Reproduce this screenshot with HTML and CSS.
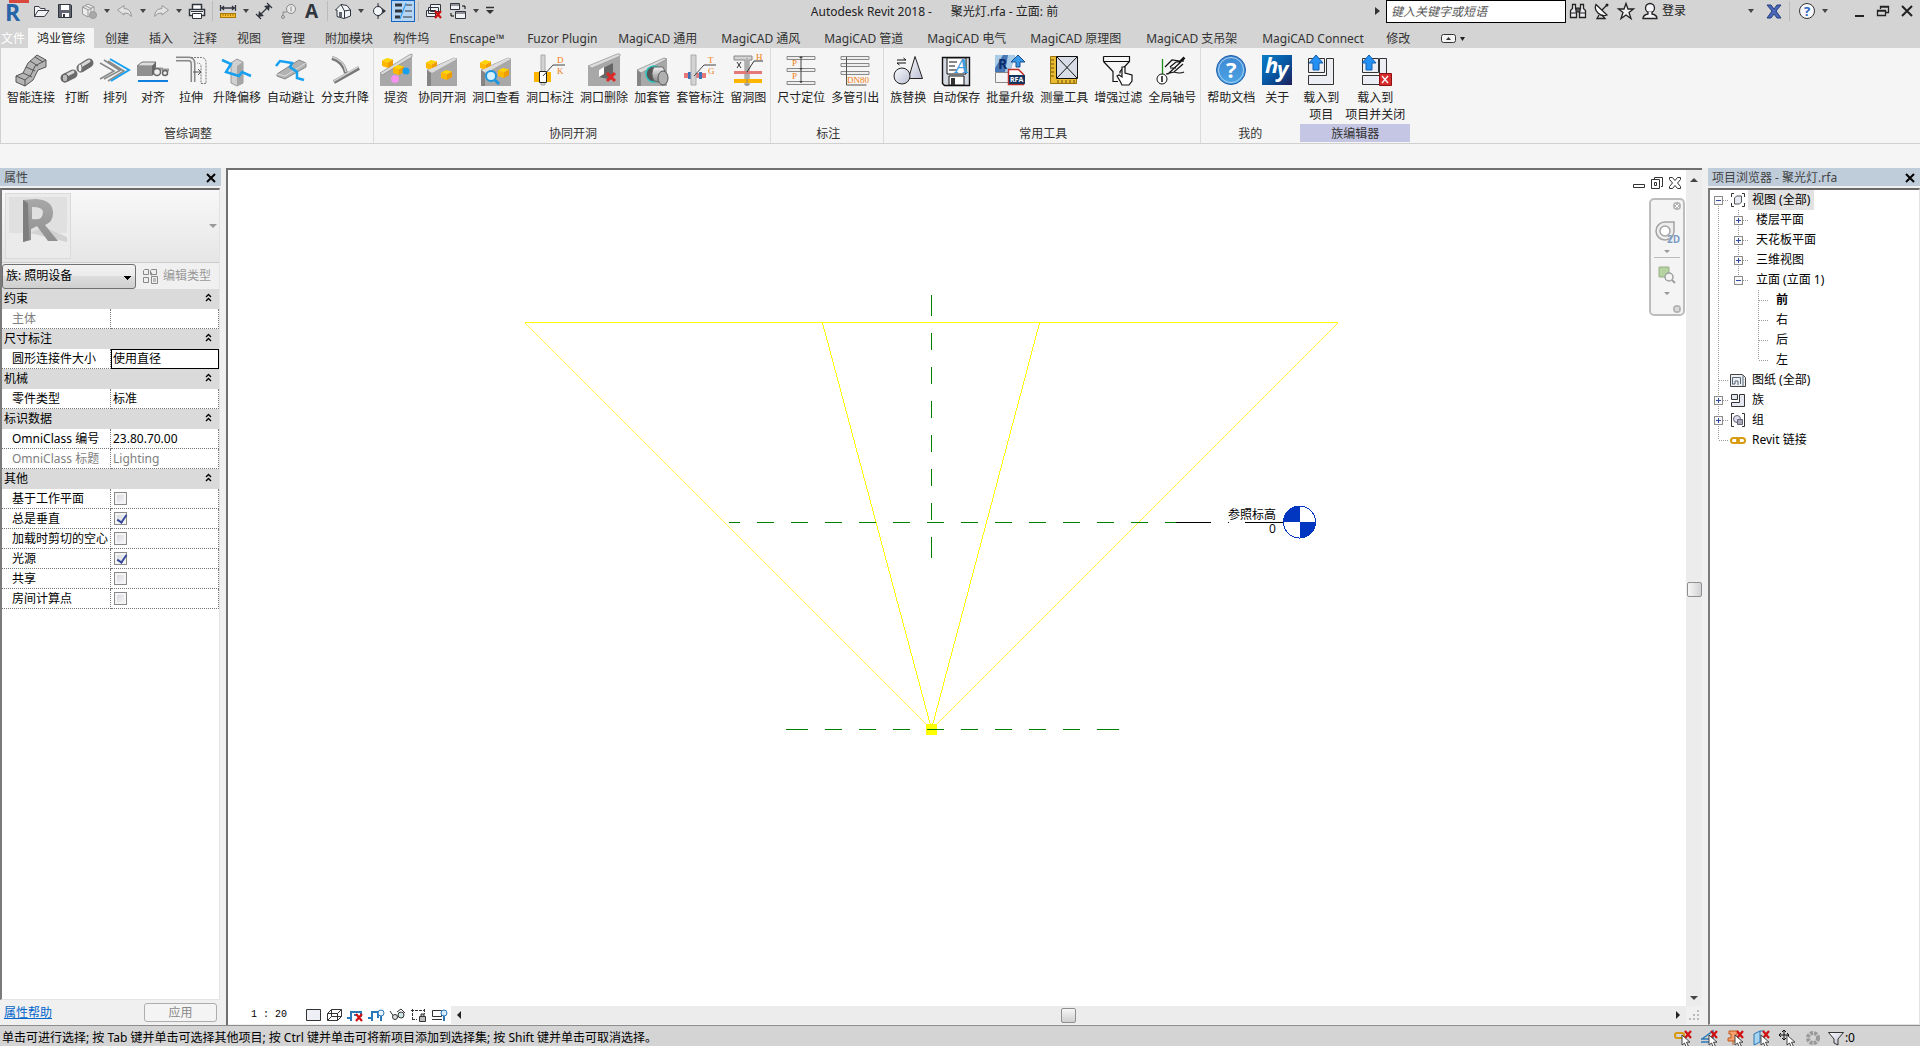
FILE: index.html
```html
<!DOCTYPE html>
<html lang="zh-CN">
<head>
<meta charset="utf-8">
<title>Autodesk Revit 2018 - 聚光灯.rfa - 立面: 前</title>
<link rel="stylesheet" href="styles.css">
</head>
<body>
<svg class="defs" width="0" height="0" aria-hidden="true">
  <defs>
    <linearGradient id="gSteel" x1="0" y1="0" x2="0" y2="1"><stop offset="0" stop-color="#f2f2f2"/><stop offset="1" stop-color="#7c7c7c"/></linearGradient>
    <linearGradient id="gLav" x1="0" y1="0" x2="1" y2="1"><stop offset="0" stop-color="#fbfbff"/><stop offset="1" stop-color="#b9bdd0"/></linearGradient>
    <linearGradient id="gHelp" x1="0" y1="0" x2="0" y2="1"><stop offset="0" stop-color="#3f87d2"/><stop offset="1" stop-color="#4aa4e4"/></linearGradient>
    <linearGradient id="gHy" x1="0" y1="0" x2="1" y2="1"><stop offset="0" stop-color="#0a7fc8"/><stop offset=".5" stop-color="#0858a4"/><stop offset="1" stop-color="#1c1f5a"/></linearGradient>
    <g id="cube"><path d="M0 2.500 5 0 11 1.500 6 4.500z" fill="#ffd400"/><path d="M0 2.500 6 4.500V10L0 8z" fill="#ffb800"/><path d="M6 4.500 11 1.500V7L6 10z" fill="#ef9c00"/></g>
    <g id="wall"><path d="M1 14 28 2l3 1v27H5l-4-1z" fill="#a8a8a8"/><path d="M1 14 28 2l3 1L5 17z" fill="#dcdcdc" stroke="#8c8c8c" stroke-width=".7"/><path d="M1 14l4 3v13H1z" fill="#858585"/></g>
    <g id="redx"><path d="M0 0 6 7M6 0 0 7" stroke="#d01010" stroke-width="2.200"/></g>
    <g id="ptr"><path d="M0 0v10l2.500-2 1.800 4 2-1-1.800-3.800H8z" fill="#fff" stroke="#333" stroke-width=".9"/></g>
    <g id="tv"><path d="M8.500 0V20" stroke="#999" stroke-dasharray="1 1"/></g>
    <g id="tt"><path d="M8.500 0V20M9 10.500H18" stroke="#999" stroke-dasharray="1 1"/></g>
    <g id="tl"><path d="M8.500 0V10M9 10.500H18" stroke="#999" stroke-dasharray="1 1"/></g>
    <g id="minus"><rect x="4.500" y="6.500" width="8" height="8" fill="#f8f8f8" stroke="#8c8c8c"/><path d="M6 10.500H11" stroke="#3149a0"/></g>
    <g id="plus"><rect x="4.500" y="6.500" width="8" height="8" fill="#f8f8f8" stroke="#8c8c8c"/><path d="M6 10.500H11M8.500 8V13" stroke="#3149a0"/></g>
    <g id="chev"><path d="M1 4 3.500 1.500 6 4M1 8 3.500 5.500 6 8" fill="none" stroke="#000" stroke-width="1.400"/></g>
  </defs>
</svg>

<header class="titlebar">
  <div class="qat">
    <button class="q q-logo" aria-label="Revit"><svg width="29" height="24"><rect x="9" y="0" width="20" height="3" fill="#d9483b"/><text x="5" y="21" class="t-logo">R</text></svg></button>
    <button class="q" aria-label="打开"><svg width="18" height="18"><path d="M2.500 14.500V4.500H7l1.500 2H13v2M2.500 14.500 6 8.500h11l-4.500 6z" fill="#f2f3f6" stroke="#3a3d46"/></svg></button>
    <button class="q" aria-label="保存"><svg width="18" height="18"><path d="M2.500 2.500h12l1 1v12h-13z" fill="#60656f" stroke="#30343d"/><path d="M5 3h8v5H5zM6 11h7v4H6z" fill="#fff"/><path d="M7 12h2v3H7z" fill="#30343d"/></svg></button>
    <button class="q" aria-label="同步"><svg width="18" height="18" fill="#ececec" stroke="#999"><path d="M2.500 5 8 2l6 3v6l-6 4-5.500-3zM2.500 5 8 8l6-3M8 8v7M5 3.500l6 3v6"/><circle cx="13" cy="13" r="3.500" fill="#aaa"/></svg></button>
    <i class="caret"></i>
    <button class="q" aria-label="放弃"><svg width="18" height="18"><path d="M1.500 8 8 3.500V6.500q7 0 7.500 8-3-4-7.500-3.500V13z" fill="#e3e3e3" stroke="#999"/></svg></button>
    <i class="caret"></i>
    <button class="q" aria-label="重做"><svg width="18" height="18"><path d="M16.500 8 10 3.500V6.500q-7 0-7.500 8 3-4 7.500-3.500V13z" fill="#e3e3e3" stroke="#999"/></svg></button>
    <i class="caret"></i>
    <button class="q" aria-label="打印"><svg width="18" height="18"><path d="M4.500 7V2.500h9V7M1.500 7.500h15v6h-15z" fill="#fff" stroke="#30343d" stroke-width="1.500"/><path d="M4.500 11.500h9v5h-9z" fill="#fff" stroke="#30343d"/><path d="M3 9.500h12" stroke="#30343d"/></svg></button>
    <i class="sep"></i>
    <button class="q" aria-label="测量"><svg width="18" height="18"><path d="M1.500 3V9M16.500 3V9M2 6H16M5 4 3 6l2 2M13 4l2 2-2 2" fill="none" stroke="#30343d" stroke-width="1.300"/><rect x="1.500" y="11.500" width="15" height="4" fill="#f6bd2a" stroke="#a97809"/><path d="M4 12v2M6.500 12v2M9 12v2M11.500 12v2M14 12v2" stroke="#a97809"/></svg></button>
    <i class="caret"></i>
    <button class="q" aria-label="对齐标注"><svg width="18" height="18"><path d="M1 12l5 5M12 1l5 5M4 14 14 4" stroke="#30343d" stroke-width="1.200"/><path d="M3 15l1-6 5 5zM15 3l-1 6-5-5z" fill="#30343d"/></svg></button>
    <button class="q" aria-label="按类别标记"><svg width="18" height="18"><circle cx="12" cy="7" r="4.500" fill="#e8e8e8" stroke="#888"/><path d="M8 10H4v4" stroke="#888" fill="none"/><circle cx="4" cy="15" r="1.500" fill="none" stroke="#888"/><path d="M12 4.500v5" stroke="#888"/></svg></button>
    <button class="q" aria-label="文字"><svg width="18" height="20"><text x="2" y="17" class="t-a">A</text></svg></button>
    <i class="sep"></i>
    <button class="q" aria-label="默认三维视图"><svg width="18" height="18"><path d="M1.500 8 7 2.500l6 1L16.500 8v6L10 16.500 3 14.500V8z" fill="#f2f3f6" stroke="#30343d"/><path d="M7 2.500 10.500 9M10.500 9V16M10.500 9l6-1" stroke="#30343d" fill="none"/><path d="M5 10h3v5H5z" fill="#60656f"/></svg></button>
    <i class="caret"></i>
    <button class="q" aria-label="剖面"><svg width="18" height="18"><path d="M8 1v16" stroke="#30343d"/><path d="M8 3l8 6-8 6z" fill="#30343d"/><circle cx="8" cy="9" r="4.500" fill="#f5f6fa" stroke="#30343d"/></svg></button>
    <button class="q-on" aria-label="细线" aria-pressed="true"><svg width="20" height="18"><path d="M2 3h7M2 9h7M2 15h5" stroke="#30343d" stroke-width="3"/><path d="M13 3h6M12 9h7M10 15h9" stroke="#30343d"/><path d="M13 1 7 17" stroke="#2f9bea" stroke-width="1.200"/></svg></button>
    <i class="sep"></i>
    <button class="q" aria-label="关闭隐藏窗口"><svg width="18" height="18"><path d="M5.500 2.500h10v7h-10zM3.500 5.500h10v6h-10zM1.500 8.500h9v6h-9z" fill="#f2f3f6" stroke="#30343d"/><use href="#redx" x="10" y="9"/></svg></button>
    <button class="q" aria-label="切换窗口"><svg width="18" height="18"><path d="M1.500 1.500h9v6h-9zM6.500 9.500h10v7h-10z" fill="#f2f3f6" stroke="#30343d"/><path d="M7 11h9M2 3h8" stroke="#30343d"/><path d="M13 4h3v3M2 11v3h3" fill="none" stroke="#000"/></svg></button>
    <i class="caret"></i>
    <button class="q-more" aria-label="自定义快速访问工具栏"><svg width="10" height="10"><path d="M1 1.500h8" stroke="#333" stroke-width="1.500"/><path d="M1 4h8L5 8z" fill="#333"/></svg></button>
  </div>
  <h1 class="title">Autodesk Revit 2018 -      聚光灯.rfa - 立面: 前</h1>
  <div class="info">
    <i class="tri-right"></i>
    <input class="search" type="text" placeholder="键入关键字或短语" aria-label="键入关键字或短语">
    <button class="q" aria-label="搜索"><svg width="18" height="18"><path d="M3.500 2.500h3v4l1 2v7h-6v-7l2-2zM11.500 2.500h3v4l2 2v7h-6v-7l1-2z" fill="#ebebf2" stroke="#222" stroke-width="1.300"/><path d="M7 6h4v4H7zM2 11h5M11 11h5" fill="#555" stroke="#222"/></svg></button>
    <button class="q" aria-label="通讯中心"><svg width="18" height="18"><path d="M3 2.500 14 13q-5 2-9-2T3 2.500z" fill="#fafafa" stroke="#222" stroke-width="1.300"/><path d="M9 8l5-5M6 13l-2 3.500h8L9 13" fill="none" stroke="#222" stroke-width="1.300"/><circle cx="14" cy="3" r="1.500" fill="#222"/></svg></button>
    <button class="q" aria-label="收藏夹"><svg width="18" height="18"><path d="M9 1.500l2 5.500h5.500l-4.500 3.500 2 6L9 13l-5 3.500 2-6L1.500 7H7z" fill="#eee" stroke="#222" stroke-width="1.300"/></svg></button>
    <button class="login"><svg width="18" height="18"><circle cx="9" cy="6" r="4.500" fill="#f4f4f8" stroke="#222" stroke-width="1.300"/><path d="M7 10v2q-5 1-5 4.500h14Q16 13 11 12v-2" fill="#f4f4f8" stroke="#222" stroke-width="1.300"/></svg>登录</button>
    <i class="caret caret-login"></i>
    <button class="q q-x" aria-label="Exchange"><svg width="18" height="18"><path d="M2 3h4l3 4 3-4h4l-5 6 5 7h-4l-3-4-3 4H2l5-7z" fill="#4a68b8" stroke="#243c80"/></svg></button>
    <i class="sep"></i>
    <button class="q q-help" aria-label="帮助"><svg width="18" height="18"><circle cx="9" cy="9" r="7.500" fill="#f6f8fc" stroke="#333"/><text x="6" y="14" class="t-q">?</text></svg></button>
    <i class="caret"></i>
    <button class="win win-min" aria-label="最小化"><svg width="16" height="16"><path d="M4 13h9" stroke="#222" stroke-width="2"/></svg></button>
    <button class="win" aria-label="还原"><svg width="16" height="16"><path d="M5.500 6V3.500h8v6H11M2.500 7.500h8v5h-8zM3 8h8M6 4h8" fill="none" stroke="#222" stroke-width="1.300"/></svg></button>
    <button class="win" aria-label="关闭"><svg width="16" height="16"><path d="M3 3 13 13M13 3 3 13" stroke="#222" stroke-width="2"/></svg></button>
  </div>
</header>

<nav class="tabs">
  <button class="tab tab-file">文件</button>
  <button class="tab tab-on">鸿业管综</button>
  <button class="tab">创建</button>
  <button class="tab">插入</button>
  <button class="tab">注释</button>
  <button class="tab">视图</button>
  <button class="tab">管理</button>
  <button class="tab">附加模块</button>
  <button class="tab">构件坞</button>
  <button class="tab tab-s">Enscape™</button>
  <button class="tab tab-m">Fuzor Plugin</button>
  <button class="tab tab-l">MagiCAD 通用</button>
  <button class="tab tab-l">MagiCAD 通风</button>
  <button class="tab tab-l">MagiCAD 管道</button>
  <button class="tab tab-l">MagiCAD 电气</button>
  <button class="tab tab-xl">MagiCAD 原理图</button>
  <button class="tab tab-xl">MagiCAD 支吊架</button>
  <button class="tab tab-xxl">MagiCAD Connect</button>
  <button class="tab">修改</button>
  <button class="tab tab-toggle" aria-label="最小化功能区"><svg width="28" height="12"><rect x="1.500" y="2.500" width="14" height="8" rx="2" fill="#f4f4f4" stroke="#333"/><path d="M6 8h5L8.500 5z" fill="#333"/><path d="M20 5h5l-2.500 4z" fill="#222"/></svg></button>
</nav>

<section class="ribbon">
  <div class="panel">
    <div class="tools">
      <button class="tool"><svg width="32" height="32"><path d="M1 22l7-3 5-10 9-8 9 5v7l-8 3-5 10-8 6-9-4z" fill="#b5b5b5" stroke="#555"/><path d="M1 22l9 4 6-5 4-9 11-6M8 19l9 4M11 13l9 4M15 7l8 5M20 3l8 5M10 26v6" fill="none" stroke="#555"/></svg>智能连接</button>
      <button class="tool"><svg width="32" height="32"><path d="M4 24 12 20M20 14 28 9" stroke="#6a6a6a" stroke-width="9" stroke-linecap="round"/><path d="M4 22 12 18M20 12 28 7" stroke="#d8d8d8" stroke-width="3" stroke-linecap="round"/><ellipse cx="4" cy="24" rx="3" ry="4" fill="#bbb" stroke="#555"/><ellipse cx="19" cy="14" rx="2" ry="4" fill="#eee" stroke="#777"/></svg>打断</button>
      <button class="tool"><svg width="32" height="32" fill="none"><path d="M1 9 15 17 1 25M5 6 21 16.500 5 25M9 7 25 17 9 27" stroke="#8a8a8a" stroke-width="1.600"/><path d="M11 5 30 16 12 27" stroke="#18a0f0" stroke-width="2"/></svg>排列</button>
      <button class="tool"><svg width="32" height="32"><path d="M0 12 5 8h14l-3 4z" fill="#ddd" stroke="#777"/><path d="M0 12h15v10H0z" fill="#8f8f8f"/><path d="M15 12l4-4v10l-4 4z" fill="#666"/><path d="M18 15h8M25 16h7" stroke="#999" stroke-width="3"/><circle cx="20" cy="18" r="3.500" fill="#eee" stroke="#666" stroke-width="1.500"/><circle cx="28" cy="19" r="2.500" fill="#eee" stroke="#666" stroke-width="1.500"/><path d="M1 27h30" stroke="#1080e0" stroke-width="2"/></svg>对齐</button>
      <button class="tool"><svg width="32" height="32" fill="none"><path d="M1 5h13q4 0 4 5v18" stroke="#888" stroke-width="5"/><path d="M1 5h13q4 0 4 5v18" stroke="#eee" stroke-width="2"/><path d="M16 3.500h10q5 0 5 5v21h-5V12q0-3-4-3" stroke="#777" stroke-dasharray="2 1"/><path d="M18 18h8M23 15l3 3-3 3" stroke="#555"/></svg>拉伸</button>
      <button class="tool"><svg width="32" height="32"><path d="M10 9l6-4 6 3v21l-6 3-6-3z" fill="#d0d0d0" stroke="#999"/><path d="M16 12l6-4v21l-6 3z" fill="#a5a5a5"/><path d="M1 6l9 4-5 8 13 4 3-4 9 4" fill="none" stroke="#18a0f0" stroke-width="2.500"/></svg>升降偏移</button>
      <button class="tool"><svg width="32" height="32"><path d="M2 20 24 6l7 3v4L10 25l-8-3z" fill="#b2b2b2" stroke="#888"/><path d="M2 20l8 2 21-13" fill="none" stroke="#ddd"/><path d="M1 12l4-5 12 2-2 4 7 5v6l7 2" fill="none" stroke="#18a0f0" stroke-width="2.500"/></svg>自动避让</button>
      <button class="tool"><svg width="32" height="32" fill="none"><path d="M3 4q11 3 14 15M5 28 30 14" stroke="#777" stroke-width="4"/><path d="M3 3q12 3 14 15M5 27 29 13" stroke="#d0d0d0" stroke-width="1.600"/></svg>分支升降</button>
    </div>
    <h2>管综调整</h2>
  </div>
  <div class="panel">
    <div class="tools">
      <button class="tool"><svg width="32" height="32"><path d="M0 19 32 0v32H0z" fill="#a8a8a8"/><path d="M0 19 29 1l3-1v3L2 21z" fill="#dcdcdc" stroke="#8c8c8c" stroke-width=".7"/><use href="#cube" x="2" y="4"/><use href="#cube" x="13" y="11"/><circle cx="26" cy="17" r="3.500" fill="#18a0f0"/><circle cx="15" cy="25" r="4" fill="#f492f0"/></svg>提资</button>
      <button class="tool"><svg width="32" height="32"><use href="#wall" y="2"/><use href="#cube" x="0" y="6"/><path d="M2 16 28 4l3 1L6 19z" fill="#dcdcdc"/><use href="#cube" x="15" y="16"/></svg>协同开洞</button>
      <button class="tool"><svg width="32" height="32"><use href="#wall" y="2"/><use href="#cube" x="0" y="6"/><path d="M2 16 28 4l3 1L6 19z" fill="#dcdcdc"/><use href="#cube" x="18" y="14"/><circle cx="11" cy="22" r="5" fill="#d6f0ff" stroke="#1996e0" stroke-width="2"/><path d="M15 26l4 4" stroke="#1996e0" stroke-width="3"/></svg>洞口查看</button>
      <button class="tool"><svg width="32" height="32"><path d="M0 18h17v10H0z" fill="#ffb400"/><path d="M7 1h4v30H7z" fill="#d3d3d3" stroke="#aaa"/><path d="M5.500 17.500h7v11h-7z" fill="#fff" stroke="#222"/><path d="M9 22 19 11h12" fill="none" stroke="#444"/><text x="23" y="9" class="t-o">D</text><text x="23" y="20" class="t-o">K</text></svg>洞口标注</button>
      <button class="tool"><svg width="32" height="32"><path d="M0 12 29 0h3v32H0z" fill="#a8a8a8"/><path d="M0 12 29 0h3v2L4 14z" fill="#dcdcdc" stroke="#999" stroke-width=".7"/><path d="M11 16 25 9v17l-14-3z" fill="#666"/><path d="M11 16l5-3v7l-5 3z" fill="#fff"/><path d="M19 19l8 8M27 19l-8 8" stroke="#e02828" stroke-width="3"/></svg>洞口删除</button>
      <button class="tool"><svg width="32" height="32"><use href="#wall" y="2"/><circle cx="18" cy="20" r="8" fill="#555" stroke="#28c4c0" stroke-width="1.500"/><path d="M18 13h9l4 9-4 7-9-2q-4-8 0-14z" fill="url(#gSteel)" stroke="#666"/><ellipse cx="27" cy="24" rx="5" ry="7" fill="#b0b0b0" stroke="#555"/></svg>加套管</button>
      <button class="tool"><svg width="32" height="32"><path d="M0 19h22v5H0z" fill="#e67878"/><path d="M4 18h3v7H4zM15 18h3v7h-3z" fill="#3c72b8"/><path d="M7 1h5v30H7z" fill="#d3d3d3" stroke="#aaa"/><path d="M10 22 20 11h12" fill="none" stroke="#444"/><text x="24" y="9" class="t-o">T</text><text x="24" y="20" class="t-o">G</text></svg>套管标注</button>
      <button class="tool"><svg width="32" height="32"><path d="M2 2h18v4h-3v25h-4V6H2z" fill="#d3d3d3" stroke="#888"/><path d="M2 17h28v3H2z" fill="#e67878"/><path d="M2 25h28v4H2z" fill="#ffb400"/><path d="M15 4v28" stroke="#888"/><path d="M5 8l4 6M9 8l-4 6M15 18 22 7h9" fill="none" stroke="#333"/><text x="24" y="6" class="t-o">H</text></svg>留洞图</button>
    </div>
    <h2>协同开洞</h2>
  </div>
  <div class="panel">
    <div class="tools">
      <button class="tool"><svg width="32" height="32"><path d="M2 2.500h28v3H2zM2 14.500h28v3H2zM2 27.500h28v3H2z" fill="#eee" stroke="#888"/><path d="M16 3v26" stroke="#444"/><path d="M14 4l2-2 2 2zM14 14l2 2 2-2zM14 27l2 2 2-2z" fill="#444"/><text x="7" y="12" class="t-o">P</text><text x="7" y="25" class="t-o">P</text></svg>尺寸定位</button>
      <button class="tool"><svg width="32" height="32"><path d="M2 2.500h28v3H2zM2 9.500h28v3H2zM2 17.500h28v3H2z" fill="#eee" stroke="#888"/><path d="M7.500 3v28h20" fill="none" stroke="#555"/><text x="8" y="29" class="t-dn">DN80</text></svg>多管引出</button>
    </div>
    <h2>标注</h2>
  </div>
  <div class="panel">
    <div class="tools">
      <button class="tool"><svg width="32" height="32"><path d="M16.500 24.500 23 2.500l7.500 22z" fill="url(#gLav)" stroke="#222"/><circle cx="10" cy="22" r="8" fill="url(#gLav)" stroke="#222"/><path d="M5 6h9l-2.500-2M14 9H5l2.500 2" fill="none" stroke="#111"/></svg>族替换</button>
      <button class="tool"><svg width="32" height="32"><path d="M2.500 3.500h27v28h-25l-2-2z" fill="#d5d9e2" stroke="#111" stroke-width="1.400"/><path d="M7 4h19v16H7zM9 22h15v9H9z" fill="#fff" stroke="#111"/><path d="M11 24h4v7h-4z" fill="#333"/><path d="M9 8h8M9 12h6M9 16h8" stroke="#111"/><text x="15" y="19" class="t-save">A</text></svg>自动保存</button>
      <button class="tool"><svg width="32" height="32"><path d="M1.500 18.500h16v10h-16z" fill="#f4f4f4" stroke="#888"/><path d="M1 1h20l-5 17H1z" fill="#4877b5"/><path d="M1 1h8L1 14zM14 1h7l-5 17h-5z" fill="#a8cbe8"/><text x="4" y="15" class="t-r">R</text><path d="M22 13V8h-5l7-7 7 7h-5v5z" fill="#399ae8" stroke="#1b4e8c"/><path d="M14.500 15.500h10l5 5v10h-15z" fill="#fff" stroke="#c03028" stroke-width="1.500"/><path d="M15 21h16v9H15z" fill="#14355f"/><text x="16" y="28" class="t-rfa">RFA</text></svg>批量升级</button>
      <button class="tool"><svg width="32" height="32"><path d="M2.500 2.500h6v22h20v5h-26z" fill="#e8bb32" stroke="#9a7408"/><path d="M8.500 2.500h21v22h-21z" fill="#d9dde8" stroke="#111"/><path d="M9 3l20 21M29 3 9 24" stroke="#111"/><path d="M3 6h3M3 10h3M3 14h3M3 18h3M3 22h3M10 29v-3M14 29v-3M18 29v-3M22 29v-3M26 29v-3" stroke="#6e5200"/></svg>测量工具</button>
      <button class="tool"><svg width="32" height="32"><path d="M1.500 2.500h26v5L18 17.500v2M1.500 7.500 11 17.500v10h5M1.500 2.500v5" fill="#f6f6f6" stroke="#111" stroke-width="1.200"/><path d="M2 7.500h25" stroke="#111"/><path d="M18 27l-3-5 2-1 3 2V13h3v6l7 2v6l-3 4h-7z" fill="#fff" stroke="#111" stroke-width="1.200"/></svg>增强过滤</button>
      <button class="tool"><svg width="32" height="32"><path d="M6.500 5v15" stroke="#1a8c1a" stroke-width="1.300"/><circle cx="6" cy="25" r="5" fill="#fff" stroke="#111"/><path d="M6 22v6" stroke="#111" stroke-width="1.500"/><path d="M9 13 16 6l8 1 4-4M10 20l8-2 9-8M14 13l6-5 8-1M12 20 29 4M18 18q6 2 10 0M14 14h6" fill="none" stroke="#111" stroke-width="1.200"/></svg>全局轴号</button>
    </div>
    <h2>常用工具</h2>
  </div>
  <div class="panel panel-open">
    <div class="tools">
      <button class="tool"><svg width="32" height="32"><circle cx="16" cy="16" r="14.500" fill="url(#gHelp)" stroke="#235fa8"/><circle cx="16" cy="16" r="12.500" fill="none" stroke="#a9d3f5"/><text x="11" y="24" class="t-help">?</text></svg>帮助文档</button>
      <button class="tool"><svg width="32" height="32"><path d="M1 1h30v30H1z" fill="url(#gHy)"/><text x="4" y="19" class="t-hy">h</text><text x="16" y="23" class="t-hy">y</text></svg>关于</button>
    </div>
    <h2>我的</h2>
  </div>
  <div class="panel panel-family">
    <div class="tools">
      <button class="tool"><svg width="32" height="32"><path d="M3.500 4.500h16v14h-16zM21.500 4.500h7v26h-25v-9h18z" fill="#eceef4" stroke="#333"/><path d="M8 16V9H4l7-8 7 8h-4v7z" fill="#2590f4" stroke="#1260b0"/></svg>载入到<br>项目</button>
      <button class="tool"><svg width="32" height="32"><path d="M3.500 4.500h16v14h-16zM20.500 4.500h7v26h-24v-9h17z" fill="#eceef4" stroke="#333"/><path d="M7 16V9H3l7-8 7 8h-4v7z" fill="#2590f4" stroke="#1260b0"/><path d="M20.500 19.500h12v12h-12z" fill="#d82c2c" stroke="#8c1010"/><path d="M23 22l6 7M29 22l-6 7" stroke="#fff" stroke-width="1.300"/></svg>载入到<br>项目并关闭</button>
    </div>
    <h2>族编辑器</h2>
  </div>
</section>

<main class="work">
  <aside class="dock dock-left">
    <div class="dock-title"><span>属性</span><button class="x" aria-label="关闭"><svg width="10" height="10"><path d="M1 1 9 9M9 1 1 9" stroke="#000" stroke-width="2"/></svg></button></div>
    <div class="frame">
      <div class="type">
        <div class="thumb"><svg width="64" height="64"><defs><linearGradient id="gR" x1="0" y1="0" x2="0" y2="1"><stop offset="0" stop-color="#a8a8a8"/><stop offset="1" stop-color="#8f8f8f"/></linearGradient></defs><path d="M3 3h58v36H3z" fill="#e0e0e0"/><path d="M24 39l14-6 23 10v5z" fill="#d2d2d2"/><path d="M17 6 30 5q17 1 17 14 0 9-8 12l13 16H42L31 32l-6 3v11l-8 2zM26 13v12q11 2 11-7 0-5-11-5z" fill="url(#gR)"/><path d="M17 6 22 9 23 46l-6 2z" fill="#7e7e7e"/></svg></div>
        <button class="drop" aria-label="类型选择器"><i class="caret caret-grey"></i></button>
      </div>
      <div class="filter">
        <select class="combo" aria-label="族"><option>族: 照明设备</option></select>
        <button class="edit" disabled><svg width="17" height="17" fill="none" stroke="#888"><path d="M1.500 2.500l1-1h4v5h-5zM8.500 2.500l1-1h5v5h-6zM1.500 9.500h5v5h-5zM9.500 8.500h6v7h-6zM9.500 4.500v3M11 11h3M11 13h3"/></svg>编辑类型</button>
      </div>
      <table class="props">
        <colgroup><col class="c-name"><col></colgroup>
        <tr class="g"><th colspan="2"><span>约束</span><svg width="8" height="10"><use href="#chev"/></svg></th></tr>
        <tr class="off"><td>主体</td><td></td></tr>
        <tr class="g"><th colspan="2"><span>尺寸标注</span><svg width="8" height="10"><use href="#chev"/></svg></th></tr>
        <tr><td>圆形连接件大小</td><td class="sel">使用直径</td></tr>
        <tr class="g"><th colspan="2"><span>机械</span><svg width="8" height="10"><use href="#chev"/></svg></th></tr>
        <tr><td>零件类型</td><td>标准</td></tr>
        <tr class="g"><th colspan="2"><span>标识数据</span><svg width="8" height="10"><use href="#chev"/></svg></th></tr>
        <tr><td>OmniClass 编号</td><td>23.80.70.00</td></tr>
        <tr class="off"><td>OmniClass 标题</td><td>Lighting</td></tr>
        <tr class="g"><th colspan="2"><span>其他</span><svg width="8" height="10"><use href="#chev"/></svg></th></tr>
        <tr><td><label for="p1">基于工作平面</label></td><td><input id="p1" type="checkbox"></td></tr>
        <tr><td><label for="p2">总是垂直</label></td><td><input id="p2" type="checkbox" checked></td></tr>
        <tr><td><label for="p3">加载时剪切的空心</label></td><td><input id="p3" type="checkbox"></td></tr>
        <tr><td><label for="p4">光源</label></td><td><input id="p4" type="checkbox" checked></td></tr>
        <tr><td><label for="p5">共享</label></td><td><input id="p5" type="checkbox"></td></tr>
        <tr><td><label for="p6">房间计算点</label></td><td><input id="p6" type="checkbox"></td></tr>
      </table>
    </div>
    <div class="apply"><a href="#">属性帮助</a><button disabled>应用</button></div>
  </aside>

  <section class="view">
    <div class="canvas">
      <svg class="drawing" shape-rendering="crispEdges">
        <g transform="translate(-228 -170)" fill="none">
          <path d="M525 322.500H1338" stroke="#ff0"/>
          <path d="M525.500 323.400 931.500 729.400M1337.500 323.400 931.500 729.400" stroke="#ff0" stroke-width=".72"/>
          <path d="M822.500 323 931.500 729 1039.500 323" stroke="#ff0" stroke-width=".98"/>
          <path d="M926 724h11v11h-11z" fill="#ff0"/>
          <path d="M931.500 333V520" stroke="#008000" stroke-dasharray="17 17"/>
          <path d="M931.500 295V316M931.500 537V558M729 522.500H740M1165 522.500H1176M786 729.500H808M1097 729.500H1119" stroke="#008000"/>
          <path d="M757 522.500H1150M825 729.500H1082" stroke="#008000" stroke-dasharray="17 17"/>
          <path d="M1176 522.500H1211M1228 522.500H1229M1245 522.500H1283" stroke="#000"/>
          <circle cx="1299.500" cy="522" r="16" fill="#fff" stroke="#0036c0"/>
          <path d="M1299.500 522V506A16 16 0 0 0 1283.500 522zM1299.500 522V538A16 16 0 0 0 1315.500 522z" fill="#0036c0"/>
          <text x="1228" y="519" class="t-level">参照标高</text>
          <text x="1269" y="533" class="t-level">0</text>
        </g>
      </svg>
      <div class="mdi">
        <button aria-label="最小化视图"><svg width="14" height="14"><path d="M1.500 8.500h11v3h-11z" fill="#fff" stroke="#333"/></svg></button>
        <button aria-label="还原视图"><svg width="14" height="14"><path d="M4.500 3V1.500h8v9H11M1.500 3.500h8v9h-8zM4.500 6.500h2v3h-2z" fill="#fff" stroke="#333"/></svg></button>
        <button aria-label="关闭视图"><svg width="14" height="14"><path d="M1.500 1.500h3l2.500 3 2.500-3h3v2L9.500 7l3 3.500v2h-3L7 9.500l-2.500 3h-3v-2l3-3.500-3-3.500z" fill="#fff" stroke="#333"/></svg></button>
      </div>
      <div class="navbar">
        <svg width="32" height="114"><g fill="#b4b4b4"><circle cx="26" cy="6" r="4"/><circle cx="26" cy="109" r="4"/></g><path d="M24 4l4 4M28 4l-4 4M24 108h4M24 110h4" stroke="#fff"/><path d="M23 22H14a9 9 0 1 0 9 9z" fill="#eee" stroke="#a4a4a4" stroke-width="1.500"/><circle cx="14" cy="31" r="5" fill="#fff" stroke="#a4a4a4" stroke-width="1.500"/><text x="16" y="43" class="t-2d">2D</text><path d="M13 50h6l-3 3zM13 92h6l-3 3z" fill="#999"/><path d="M3 57.500h26" stroke="#bbb"/><path d="M8 67h10v10H8z" fill="#b5d3a2" stroke="#9ab088"/><circle cx="18" cy="77" r="4" fill="#f4f4f4" stroke="#a0a0a0" stroke-width="1.500"/><path d="M21 80l3 3" stroke="#a0a0a0" stroke-width="2"/></svg>
      </div>
    </div>
    <div class="vscroll"><i class="up"></i><span class="thumb-v"></span><i class="down"></i></div>
    <div class="viewbar">
      <span class="scale">1 : 20</span>
      <div class="vtools">
        <button aria-label="详细程度"><svg width="17" height="14"><path d="M1.500 1.500h14v11h-14z" fill="#eef0f6" stroke="#333"/></svg></button>
        <button aria-label="视觉样式"><svg width="17" height="14"><path d="M1.500 5.500h10v7h-10zM5.500 1.500h10v7h-10zM1.500 5.500l4-4M11.500 5.500l4-4M11.500 12.500l4-4M1.500 12.500l4-4" fill="none" stroke="#333"/></svg></button>
        <button aria-label="关闭裁剪"><svg width="17" height="14"><path d="M0 10h4V4h10v5M4 7v6M7 7h4" fill="none" stroke="#2a78b8" stroke-width="2"/><use href="#redx" x="9" y="6"/></svg></button>
        <button aria-label="显示裁剪"><svg width="17" height="14"><path d="M0 10h4V4h6v6M4 7v6" fill="none" stroke="#2a78b8" stroke-width="2"/><circle cx="13" cy="5" r="3" fill="#e9f4ff" stroke="#2a78b8"/><path d="M13 8v5" stroke="#2a78b8" stroke-width="2"/></svg></button>
        <button aria-label="临时隐藏"><svg width="17" height="14"><path d="M1 3 5 9M8 4l4-3 4 4" fill="none" stroke="#333"/><circle cx="6" cy="9" r="2.500" fill="#ddd" stroke="#333"/><circle cx="12" cy="7" r="3" fill="#cfe6e6" stroke="#333"/></svg></button>
        <button aria-label="显示约束"><svg width="17" height="14"><path d="M1 2.500h14M2.500 1v12M2 11.500h5M14.500 1v5" stroke="#333" stroke-dasharray="3 1"/><path d="M9.500 8.500h6v5h-6zM11 8V6h3v2" fill="#bbb" stroke="#333"/></svg></button>
        <button aria-label="显示隐藏的图元"><svg width="17" height="14"><path d="M1.500 2.500h9v6h-9zM1 11.500h10" fill="#fff" stroke="#333"/><circle cx="13" cy="5" r="3" fill="#d5ecff" stroke="#2a78b8"/><path d="M13 8v5" stroke="#2a78b8" stroke-width="2"/></svg></button>
      </div>
      <div class="hscroll"><i class="left"></i><span class="thumb-h"></span><i class="right"></i></div>
    </div>
    <div class="grip"><svg width="12" height="12"><path d="M9 1h2v2H9zM5 5h2v2H5zM9 5h2v2H9zM1 9h2v2H1zM5 9h2v2H5zM9 9h2v2H9z" fill="#bbb"/></svg></div>
  </section>

  <aside class="dock dock-right">
    <div class="dock-title"><span>项目浏览器 - 聚光灯.rfa</span><button class="x" aria-label="关闭"><svg width="10" height="10"><path d="M1 1 9 9M9 1 1 9" stroke="#000" stroke-width="2"/></svg></button></div>
    <div class="frame">
      <ul class="tree">
        <li class="l0 cur"><svg width="38" height="20"><path d="M8.500 14V20M13 10.500h6" stroke="#999" stroke-dasharray="1 1"/><use href="#minus"/><path d="M24 3.500h-2.500V7M32 3.500h2.500V7M24 16.500h-2.500V13M32 16.500h2.500V13" fill="none" stroke="#333"/><path d="M24.500 8l2-2h5v6l-2 2h-5z" fill="#e8ebf4" stroke="#555"/></svg><span>视图 (全部)</span></li>
        <li class="l1"><svg width="42" height="20"><use href="#tv"/><use href="#tt" x="20"/><use href="#plus" x="20"/></svg><span>楼层平面</span></li>
        <li class="l1"><svg width="42" height="20"><use href="#tv"/><use href="#tt" x="20"/><use href="#plus" x="20"/></svg><span>天花板平面</span></li>
        <li class="l1"><svg width="42" height="20"><use href="#tv"/><use href="#tt" x="20"/><use href="#plus" x="20"/></svg><span>三维视图</span></li>
        <li class="l1"><svg width="42" height="20"><use href="#tv"/><use href="#tl" x="20"/><use href="#minus" x="20"/></svg><span>立面 (立面 1)</span></li>
        <li class="l2 on"><svg width="62" height="20"><use href="#tv"/><use href="#tt" x="40"/></svg><span>前</span></li>
        <li class="l2"><svg width="62" height="20"><use href="#tv"/><use href="#tt" x="40"/></svg><span>右</span></li>
        <li class="l2"><svg width="62" height="20"><use href="#tv"/><use href="#tt" x="40"/></svg><span>后</span></li>
        <li class="l2"><svg width="62" height="20"><use href="#tv"/><use href="#tl" x="40"/></svg><span>左</span></li>
        <li class="l0"><svg width="38" height="20"><use href="#tt"/><path d="M20.500 4.500h12l3 3v9h-15z" fill="#eef0f4" stroke="#444"/><path d="M22.500 14V7.500h8V14M22 14h3v-3h3v4M33 5v11" fill="none" stroke="#567"/></svg><span>图纸 (全部)</span></li>
        <li class="l0"><svg width="38" height="20"><use href="#tt"/><use href="#plus"/><path d="M21.500 4.500h6v5h-6zM29.500 4.500h5v12h-13v-4h8z" fill="#e4e7ee" stroke="#333"/></svg><span>族</span></li>
        <li class="l0"><svg width="38" height="20"><use href="#tt"/><use href="#plus"/><path d="M24 3.500h-2.500v13H24M32 3.500h2.500v13H32" fill="none" stroke="#333"/><circle cx="27" cy="9" r="3.500" fill="#dde" stroke="#667"/><path d="M27.500 9.500h5v5h-5z" fill="#aab" stroke="#667"/></svg><span>组</span></li>
        <li class="l0"><svg width="38" height="20"><use href="#tl"/><rect x="21" y="8" width="8" height="5" rx="2.500" fill="none" stroke="#d89a10" stroke-width="2"/><rect x="27" y="8" width="8" height="5" rx="2.500" fill="none" stroke="#d89a10" stroke-width="2"/></svg><span>Revit 链接</span></li>
      </ul>
    </div>
  </aside>
</main>

<footer class="status">
  <p>单击可进行选择; 按 Tab 键并单击可选择其他项目; 按 Ctrl 键并单击可将新项目添加到选择集; 按 Shift 键并单击可取消选择。</p>
  <div class="filters">
    <button aria-label="选择链接"><svg width="18" height="18"><rect x="1" y="4" width="9" height="5" rx="2" fill="none" stroke="#d89a10" stroke-width="2"/><use href="#redx" x="11" y="2"/><use href="#ptr" x="8" y="6"/></svg></button>
    <button aria-label="选择基线图元"><svg width="18" height="18"><path d="M2 10 13 2v10M1 10h11M1 13h11" fill="none" stroke="#2a78b8" stroke-width="1.500"/><use href="#redx" x="11" y="2"/><use href="#ptr" x="9" y="6"/></svg></button>
    <button aria-label="选择锁定图元"><svg width="18" height="18"><path d="M3 2h9v3h-2v4h3v3H2V9h3V5H3zM7 12v4" fill="#f4a070" stroke="#c05818"/><use href="#redx" x="11" y="2"/><use href="#ptr" x="9" y="6"/></svg></button>
    <button aria-label="按面选择"><svg width="18" height="18"><path d="M2 5l6-3v11l-6 3z" fill="#a8d4f0" stroke="#2a78b8"/><path d="M8 2h4" stroke="#2a78b8"/><use href="#redx" x="11" y="2"/><use href="#ptr" x="9" y="6"/></svg></button>
    <button aria-label="选择时拖曳"><svg width="18" height="18"><path d="M1 6h10M6 1v10M3 4 1 6l2 2M9 4l2 2-2 2M4 3l2-2 2 2M4 9l2 2 2-2" fill="none" stroke="#111"/><use href="#ptr" x="9" y="6"/></svg></button>
    <button aria-label="后台进程"><svg width="18" height="18"><circle cx="9" cy="9" r="5" fill="none" stroke="#999" stroke-width="4" stroke-dasharray="3 1"/></svg></button>
    <button class="count" aria-label="过滤器"><svg width="18" height="18"><path d="M1.500 3.500h15L11 10v6l-4-2v-4z" fill="url(#gLav)" stroke="#333"/></svg>:0</button>
  </div>
</footer>
</body>
</html>
```

FILE: styles.css
```css
* { box-sizing: border-box; }

html { background: #f5f5f5; }

body {
  margin: 0;
  height: 100vh;
  display: flex;
  flex-direction: column;
  overflow: hidden;
  background: #f5f5f5;
  color: #222;
  font: 12px/16px "Noto Sans", "Noto Sans CJK SC", sans-serif;
}

button, input, select { font: inherit; color: inherit; }
button { margin: 0; padding: 0; border: 0; background: none; white-space: nowrap; }
svg { display: block; flex: none; overflow: visible; }
h1, h2, p, ul { margin: 0; padding: 0; font-size: 12px; font-weight: 400; }
.defs { position: absolute; }

/* Lettering inside icons */
.t-logo { font: 700 23px "Open Sans", sans-serif; fill: #2864a8; }
.t-a { font: 700 19px "Open Sans", sans-serif; fill: #30343d; }
.t-q { font: 700 13px "Open Sans", sans-serif; fill: #2a66c0; }
.t-o, .t-dn { font: 9px "Liberation Serif", serif; fill: #f07c10; }
.t-save { font: italic 700 21px "Liberation Serif", serif; fill: #3d9be0; }
.t-r { font: 700 14px "Open Sans", sans-serif; fill: #0d2e6a; }
.t-rfa { font: 700 7px "Open Sans", sans-serif; fill: #fff; }
.t-help { font: 700 22px "Open Sans", sans-serif; fill: #fff; }
.t-hy { font: italic 700 22px "Open Sans", sans-serif; fill: #fff; }
.t-2d { font: 700 10px "Open Sans", sans-serif; fill: #7d9cc4; }
.t-level { font: 12px "Open Sans", "Noto Sans CJK SC", sans-serif; fill: #000; }

/* Title bar */
.titlebar { display: flex; height: 28px; background: #d4d4d4; flex: none; }
.qat, .info { display: flex; flex: none; align-items: center; height: 22px; }
.qat { width: 504px; }
.q { width: 24px; height: 22px; display: grid; place-items: center; flex: none; }
.q-logo { width: 29px; place-items: start; }
.q-on { width: 24px; height: 22px; display: grid; place-items: center; background: #b5d5f5; border: 1px solid #1464c0; flex: none; }
.q-more { width: 16px; display: grid; place-items: center; }
.sep { width: 1px; height: 20px; margin: 0 3px; background: #bbb; flex: none; }
.caret { width: 12px; flex: none; display: grid; place-items: center; }
.caret::before { content: ""; border: 3px solid transparent; border-top: 4px solid #444; border-bottom: 0; }
.caret-grey::before { border-width: 4px 4px 0; border-top-color: #999; }
.title { flex: 1; padding: 4px 10px 0 0; text-align: center; white-space: pre; }
.tri-right { border: 4px solid transparent; border-left: 5px solid #333; border-right: 0; margin-right: 6px; }
.search { width: 180px; height: 23px; padding: 0 4px; border: 1px solid #000; border-radius: 0; background: #fff; font-style: italic; }
.search::placeholder { color: #555; opacity: 1; }
.login { display: flex; align-items: center; gap: 3px; margin-left: 3px; }
.caret-login { margin-left: 59px; }
.q-x { margin-left: 5px; }
.q-help { margin-left: 2px; }
.win { width: 24px; display: grid; place-items: center; }
.win-min { margin-left: 16px; }
.info { padding-right: 1px; }

/* Ribbon tabs */
.tabs { display: flex; height: 20px; background: #d4d4d4; color: #333; flex: none; }
.tab { padding: 2px 10px 0; line-height: 18px; text-align: left; }
.tab-file { padding: 2px 3px 0 1px; color: #fff; }
.tab-on { background: #f5f5f5; padding: 2px 9px 0; margin-right: 1px; color: #222; }
.tab-s, .tab-m, .tab-l, .tab-xl, .tab-xxl { padding-right: 0; }
.tab-s { width: 78px; }
.tab-m { width: 91px; }
.tab-l { width: 103px; }
.tab-xl { width: 116px; }
.tab-xxl { width: 124px; }
.tab-toggle { padding: 0 20px; display: grid; place-items: center; }

/* Ribbon */
.ribbon { display: flex; height: 96px; background: #f5f5f5; border-left: 1px solid #d0d0d0; border-bottom: 1px solid #d0d0d0; margin-bottom: 24px; flex: none; }
.panel { display: flex; flex-direction: column; padding: 1px 1px 1px 3px; border-right: 1px solid #dadada; }
.panel-open { border-right-color: transparent; }
.tools { display: flex; flex: 1; padding-top: 5px; }
.tool { display: flex; flex-direction: column; align-items: center; justify-content: flex-start; min-width: 38px; padding: 0 3px; gap: 3px; line-height: 17px; }
.panel h2 { padding-top: 2px; text-align: center; color: #333; }
.panel-family { margin-left: 2px; padding: 1px 0; border: 0; }
.panel-family h2 { background: #c5c6e4; }
.panel-family .tools { padding-right: 2px; }

/* Work area */
.work { flex: 1; display: flex; min-height: 0; background: #f0f0f0; }
.dock { display: flex; flex-direction: column; flex: none; }
.dock-left { width: 221px; margin-right: 5px; }
.dock-right { width: 212px; }
.dock-title { display: flex; align-items: center; justify-content: space-between; height: 18px; padding: 1px 5px 0 4px; margin-bottom: 2px; background: #bfcddb; color: #444; }
.frame { flex: 1; min-height: 0; border: 1px solid #e3e3e3; border-width: 2px 1px 1px 2px; border-top-color: #6b6b6b; border-left-color: #7b7b7b; background: #fff; }
.dock-left .frame { margin-right: 1px; }
.type { display: flex; justify-content: space-between; height: 73px; padding: 3px 0 3px 3px; background: linear-gradient(#f8f8f8, #e6e6e6); border-bottom: 1px solid #ccc; }
.thumb { width: 66px; height: 66px; border: 1px solid #dadada; background: #ebebeb; }
.drop { width: 12px; }
.filter { display: flex; align-items: center; height: 26px; background: #f0f0f0; }
.combo {
  width: 134px;
  height: 25px;
  padding: 0 3px;
  appearance: none;
  border: 1px solid #707070;
  border-radius: 3px;
  background:
    linear-gradient(to bottom left, #000 50%, transparent 50%) 121px 11px / 4px 4px no-repeat,
    linear-gradient(to bottom right, #000 50%, transparent 50%) 125px 11px / 4px 4px no-repeat,
    linear-gradient(#f2f2f2, #ebebeb 50%, #ddd 50%, #cfcfcf);
  color: #000;
}
.edit { display: flex; align-items: center; gap: 4px; margin-left: 6px; color: #999; }

.props { width: 100%; border-collapse: separate; border-spacing: 0; table-layout: fixed; color: #000; }
.c-name { width: 109px; }
.props tr { height: 20px; }
.props th { height: 20px; padding: 0 6px 0 2px; background: #dadada; font-weight: 400; }
.props th span { float: left; line-height: 20px; }
.props th svg { float: right; margin-top: 4px; }
.props td { height: 20px; padding: 0 0 0 2px; border: 0 dotted #777; border-width: 0 1px 1px 0; white-space: nowrap; line-height: 18px; }
.props td:first-child { padding-left: 10px; }
.props .off { color: #808080; }
.props .sel { border: 1px solid #000; padding-left: 1px; }
.props input { display: block; appearance: none; width: 13px; height: 13px; margin: 1px; border: 1px solid #8a8a8a; background: linear-gradient(135deg, #cfd3d8, #fafafa); box-shadow: inset 0 0 0 2px #f4f4f4; }
.props input:checked::before { content: ""; display: block; width: 4px; height: 8px; margin: 0 4px; border: solid #34469c; border-width: 0 2px 2px 0; transform: rotate(35deg); }
.apply { display: flex; justify-content: space-between; align-items: center; height: 25px; padding: 0 4px; }
.apply a { color: #0066cc; }
.apply button { width: 73px; height: 19px; border: 1px solid #adadad; border-radius: 3px; background: #f4f4f4; color: #888; line-height: 16px; }

/* View */
.view { flex: 1; min-width: 0; margin-right: 6px; display: grid; grid-template: minmax(0, 1fr) 18px / minmax(0, 1fr) 16px; border: solid #707070; border-width: 2px 0 0 2px; padding-bottom: 1px; background: #f0f0f0; }
.canvas { position: relative; background: #fff; overflow: hidden; }
.drawing { position: absolute; inset: 0; width: 100%; height: 100%; }
.mdi { position: absolute; top: 6px; right: 4px; display: flex; gap: 4px; }
.navbar { position: absolute; top: 28px; right: 1px; width: 36px; height: 118px; border: 2px solid #bdbdbd; border-radius: 5px; background: #f4f4f4; }
.vscroll { display: flex; flex-direction: column; align-items: center; background: #ececec; padding: 8px 0 6px; }
.thumb-v, .thumb-h { width: 15px; height: 15px; border: 1px solid #8f8f8f; border-radius: 2px; background: linear-gradient(90deg, #f6f6f6, #d2d2d6); }
.thumb-v { margin: auto 0; }
.thumb-h { margin: 0 auto; background: linear-gradient(#f6f6f6, #cfcfcf); }
.up, .down, .left, .right { border: 4px solid transparent; }
.up { border-top: 0; border-bottom-color: #444; }
.down { border-bottom: 0; border-top-color: #444; }
.left { border-left: 0; border-right-color: #222; }
.right { border-right: 0; border-left-color: #222; }
.viewbar { display: flex; align-items: center; background: #fff; }
.scale { width: 77px; padding-left: 23px; font-family: "Liberation Mono", monospace; font-size: 10px; white-space: pre; color: #000; }
.vtools { display: flex; gap: 4px; flex: none; }
.hscroll { flex: 1; display: flex; align-items: center; height: 18px; margin-left: 3px; padding: 0 6px; background: #ececec; }
.grip { display: grid; place-items: center; }

/* Project browser */
.tree { list-style: none; color: #000; }
.tree li { display: flex; height: 20px; }
.tree span { padding: 0 4px; line-height: 20px; }
.tree .cur span { background: #e2e2e2; }
.tree .on { font-weight: 700; }

/* Status bar */
.status { display: flex; justify-content: space-between; height: 21px; border-top: 1px solid #8c8c8c; background: #d4d4d4; color: #000; flex: none; }
.status p { padding-left: 2px; line-height: 24px; white-space: nowrap; }
.filters { display: flex; gap: 8px; align-items: center; padding: 4px 65px 0 0; }
.count { display: flex; align-items: center; margin-left: -3px; }
```
